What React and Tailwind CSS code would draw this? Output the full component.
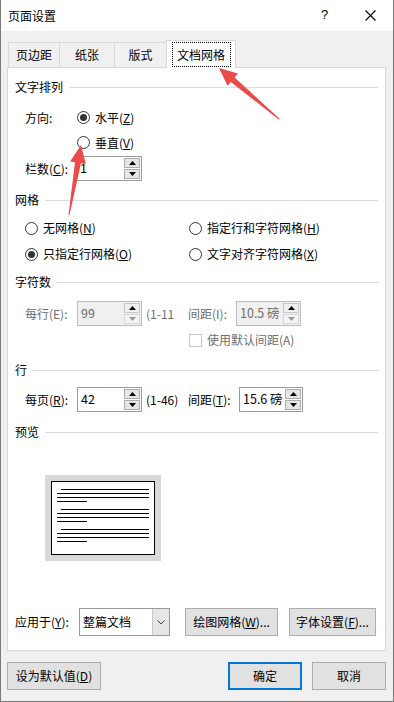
import React from "react";

const Radio = ({ on }) => (
  <span className="w-[13px] h-[13px] rounded-full border border-[#333333] bg-white flex items-center justify-center shrink-0">
    {on && <span className="w-[7px] h-[7px] rounded-full bg-[#333333]" />}
  </span>
);

const Heading = ({ children }) => (
  <div className="flex items-center h-[16px] pl-[7px] pr-[6px]">
    <span className="leading-none">{children}</span>
    <span className="flex-1 h-px bg-[#dcdcdc] ml-[6px]" />
  </div>
);

const Tri = ({ up, color }) => (
  <svg width="7" height="4" viewBox="0 0 7 4">
    {up ? <polygon points="0,4 7,4 3.5,0" fill={color} /> : <polygon points="0,0 7,0 3.5,4" fill={color} />}
  </svg>
);

const Spin = ({ value, wClass, disabled }) => (
  <div
    className={
      "flex h-[25px] border p-px " +
      wClass +
      (disabled ? " border-[#bdbdbd] bg-[#f0f0f0] text-[#6d6d6d]" : " border-[#9a9a9a] bg-white text-black")
    }
  >
    <div className="flex-1 flex items-center pl-[2px] leading-none text-[12.5px]">{value}</div>
    <div className="w-[16px] flex flex-col gap-px">
      <div className={"flex-1 flex items-center justify-center border " + (disabled ? "border-[#c8c8c8] bg-[#efefef]" : "border-[#adadad] bg-[#e5e5e5]")}>
        <Tri up color="#000" />
      </div>
      <div className={"flex-1 flex items-center justify-center border " + (disabled ? "border-[#d6d6d6] bg-[#f4f4f4]" : "border-[#adadad] bg-[#e5e5e5]")}>
        <Tri color={disabled ? "#9a9a9a" : "#000"} />
      </div>
    </div>
  </div>
);

const Btn = ({ children, wClass, extra = "" }) => (
  <div className={"h-[28px] flex items-center justify-center bg-[#e1e1e1] border border-[#adadad] " + wClass + " " + extra}>
    <span className="leading-none">{children}</span>
  </div>
);

export default function App() {
  return (
    <div className="relative w-[394px] h-[702px] bg-[#f0f0f0] border-x border-b border-[#7a7a7a] text-[12px] text-black font-['Noto_Sans_CJK_SC','Microsoft_YaHei',sans-serif] overflow-hidden">
      {/* Title bar */}
      <div className="h-[31px] bg-white flex items-center pl-[7px] relative">
        <span className="leading-none">页面设置</span>
        <span className="absolute left-[320px] top-[8px] text-[13px] leading-none font-['Liberation_Sans',sans-serif]">?</span>
        <svg className="absolute left-[364px] top-[10px]" width="11" height="11" viewBox="0 0 11 11">
          <path d="M0.5 0.5 L10.5 10.5 M10.5 0.5 L0.5 10.5" stroke="#000" strokeWidth="1.1" />
        </svg>
      </div>

      {/* Tabs */}
      <div className="flex items-end pl-[7px] pt-[9px] relative z-10">
        <div className="w-[52px] h-[25px] border border-[#d9d9d9] border-b-0 flex items-center justify-center bg-[#f0f0f0]">
          <span className="leading-none">页边距</span>
        </div>
        <div className="w-[55px] h-[25px] border-t border-r border-[#d9d9d9] flex items-center justify-center bg-[#f0f0f0]">
          <span className="leading-none">纸张</span>
        </div>
        <div className="w-[52px] h-[25px] border-t border-r border-[#d9d9d9] flex items-center justify-center bg-[#f0f0f0]">
          <span className="leading-none">版式</span>
        </div>
        <div className="w-[70px] h-[28px] -ml-px -mb-px border border-b-0 border-[#d9d9d9] bg-white flex items-start justify-center pt-[1px]">
          <div className="w-[59px] h-[25px] border border-dotted border-black flex items-center justify-center">
            <span className="leading-none">文档网格</span>
          </div>
        </div>
      </div>

      {/* Panel */}
      <div className="ml-[6px] w-[379px] h-[584px] border border-[#d9d9d9] bg-white flex flex-col">
        <div className="mt-[11px]">
          <Heading>文字排列</Heading>
        </div>
        <div className="mt-[10px] h-[25px] flex items-center pl-[17px]">
          <span className="w-[52px] leading-none">方向:</span>
          <Radio on />
          <span className="ml-[5px] leading-none">水平(<u>Z</u>)</span>
        </div>
        <div className="h-[25px] flex items-center pl-[69px]">
          <Radio />
          <span className="ml-[5px] leading-none">垂直(<u>V</u>)</span>
        </div>
        <div className="mt-px h-[25px] flex items-center pl-[17px]">
          <span className="w-[51px] leading-none">栏数(<u>C</u>):</span>
          <Spin value="1" wClass="w-[66px]" />
        </div>

        <div className="mt-[11px]">
          <Heading>网格</Heading>
        </div>
        <div className="mt-[8px] h-[24px] flex items-center pl-[17px]">
          <div className="w-[164px] flex items-center">
            <Radio />
            <span className="ml-[5px] leading-none">无网格(<u>N</u>)</span>
          </div>
          <Radio />
          <span className="ml-[5px] leading-none">指定行和字符网格(<u>H</u>)</span>
        </div>
        <div className="mt-[2px] h-[24px] flex items-center pl-[17px]">
          <div className="w-[164px] flex items-center">
            <Radio on />
            <span className="ml-[5px] leading-none">只指定行网格(<u>O</u>)</span>
          </div>
          <Radio />
          <span className="ml-[5px] leading-none">文字对齐字符网格(<u>X</u>)</span>
        </div>

        <div className="mt-[8px]">
          <Heading>字符数</Heading>
        </div>
        <div className="mt-[11px] h-[25px] flex items-center pl-[17px] text-[#6d6d6d]">
          <span className="w-[52px] leading-none">每行(E):</span>
          <Spin value="99" wClass="w-[65px]" disabled />
          <span className="w-[46px] pl-[4px] leading-none whitespace-nowrap">(1-11</span>
          <span className="w-[48px] leading-none">间距(I):</span>
          <Spin value="10.5 磅" wClass="w-[65px]" disabled />
        </div>
        <div className="mt-[4px] h-[20px] flex items-center pl-[181px] text-[#6d6d6d]">
          <span className="w-[13px] h-[13px] border border-[#c5c5c5] bg-white" />
          <span className="ml-[5px] leading-none">使用默认间距(A)</span>
        </div>

        <div className="mt-[12px]">
          <Heading>行</Heading>
        </div>
        <div className="mt-[9px] h-[25px] flex items-center pl-[17px]">
          <span className="w-[52px] leading-none">每页(<u>R</u>):</span>
          <Spin value="42" wClass="w-[65px]" />
          <span className="w-[46px] pl-[4px] leading-none whitespace-nowrap">(1-46)</span>
          <span className="w-[51px] leading-none">间距(<u>T</u>):</span>
          <Spin value="15.6 磅" wClass="w-[64px]" />
        </div>

        <div className="mt-[12px]">
          <Heading>预览</Heading>
        </div>
        <div className="mt-[35px] ml-[37px] w-[116px] h-[86px] bg-[#d9d9d9] p-[6px]">
          <div className="w-[104px] h-[74px] bg-white border border-black">
            <svg width="102" height="72" viewBox="0 0 102 72">
              <g stroke="#000" strokeWidth="1">
                <line x1="9" y1="7.5" x2="97" y2="7.5" />
                <line x1="5" y1="11.5" x2="97" y2="11.5" />
                <line x1="5" y1="15.5" x2="97" y2="15.5" />
                <line x1="5" y1="19.5" x2="35" y2="19.5" />
                <line x1="9" y1="27.5" x2="97" y2="27.5" />
                <line x1="5" y1="31.5" x2="97" y2="31.5" />
                <line x1="5" y1="35.5" x2="97" y2="35.5" />
                <line x1="5" y1="39.5" x2="35" y2="39.5" />
                <line x1="9" y1="47.5" x2="97" y2="47.5" />
                <line x1="5" y1="51.5" x2="97" y2="51.5" />
                <line x1="5" y1="55.5" x2="97" y2="55.5" />
                <line x1="5" y1="59.5" x2="35" y2="59.5" />
              </g>
            </svg>
          </div>
        </div>

        <div className="mt-[47px] h-[28px] flex items-center pl-[7px]">
          <span className="w-[64px] leading-none">应用于(<u>Y</u>):</span>
          <div className="w-[91px] h-[28px] border border-[#9a9a9a] bg-white flex">
            <div className="flex-1 flex items-center pl-[3px] leading-none">整篇文档</div>
            <div className="w-[17px] bg-[#e6e6e6] border-l border-[#c8c8c8] flex items-center justify-center">
              <svg width="8" height="5" viewBox="0 0 8 5">
                <path d="M0.5 0.5 L4 4 L7.5 0.5" stroke="#444" strokeWidth="1" fill="none" />
              </svg>
            </div>
          </div>
          <Btn wClass="w-[93px]" extra="ml-[15px]">绘图网格(<u>W</u>)...</Btn>
          <Btn wClass="w-[87px]" extra="ml-[11px]">字体设置(<u>F</u>)...</Btn>
        </div>
      </div>

      {/* Bottom buttons */}
      <div className="mt-[11px] flex items-center pl-[6px]">
        <Btn wClass="w-[94px]">设为默认值(<u>D</u>)</Btn>
        <div className="ml-[127px] w-[74px] h-[28px] border-2 border-[#0078d7] bg-[#e1e1e1] flex items-center justify-center">
          <span className="leading-none">确定</span>
        </div>
        <Btn wClass="w-[74px]" extra="ml-[10px]">取消</Btn>
      </div>

      {/* Annotation arrows */}
      <svg className="absolute left-0 top-0 pointer-events-none" width="394" height="702" viewBox="0 0 394 702">
        <polygon points="218,68 226.5,85.8 229.8,82 277.7,119.4 278.3,118.6 233.6,77.4 236.9,73.6" fill="#ea4b4b" />
        <polygon points="80,145 69.1,161.4 74,162.2 67.5,214.9 68.5,215.1 80,163.2 84.9,164.1" fill="#ea4b4b" />
      </svg>
    </div>
  );
}
